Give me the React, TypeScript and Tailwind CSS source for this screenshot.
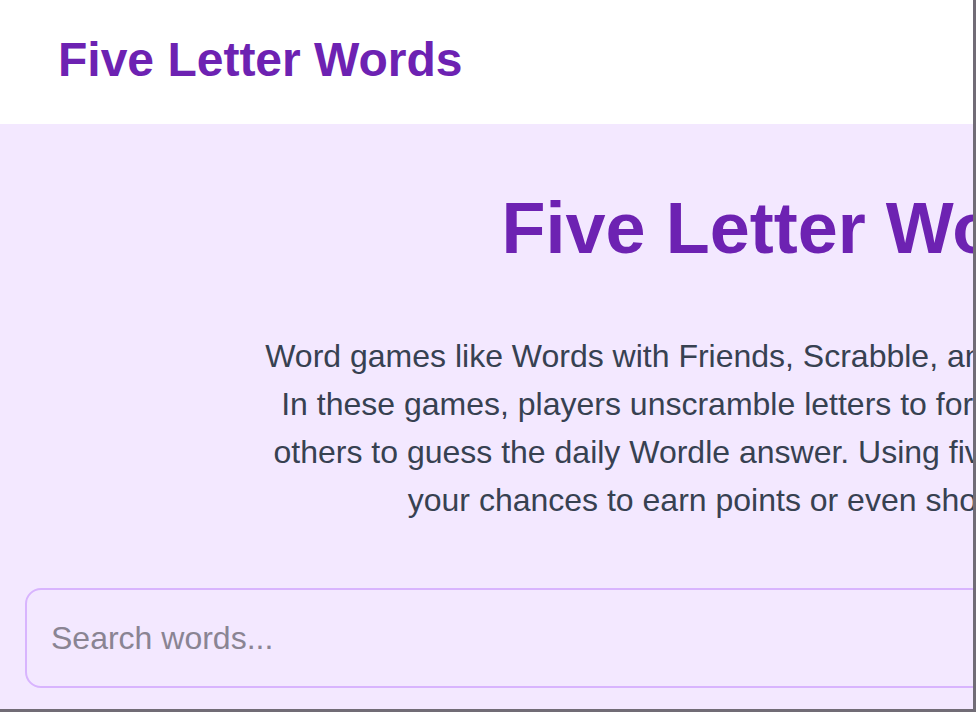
export default function App() {
  return (
    <div className="w-[976px] h-[712px] overflow-hidden border-r-[3px] border-b-[3px] border-[#716c76] bg-[#f3e8ff] font-['Liberation_Sans',Arial,sans-serif]">
      <div className="w-[1610px]">
        {/* Header */}
        <header className="h-[124px] bg-white px-[58px] pt-[32px]">
          <h1 className="text-[48px] leading-[55px] font-bold text-[#6d22b2]">Five Letter Words</h1>
        </header>

        {/* Hero */}
        <main className="px-[25px] pt-[63px]">
          <h2 className="text-center text-[72px] leading-[83px] font-bold text-[#6d22b2]">Five Letter Words</h2>
          <p className="mt-[62px] text-center text-[32px] leading-[48px] text-[#374151]">
            Word games like Words with Friends, Scrabble, and Wordle are really loved.
            <br />
            In these games, players unscramble letters to form words or compete with
            <br />
            others to guess the daily Wordle answer. Using five letter words could raise
            <br />
            your chances to earn points or even show off your skills.
          </p>
          <div className="mt-[64px]">
            <input
              type="text"
              placeholder="Search words..."
              className="w-full h-[100px] rounded-[16px] border-2 border-[#d8b4fe] bg-transparent px-[24px] text-[32px] text-[#374151] outline-none placeholder:text-[#8a8493]"
            />
          </div>
        </main>
      </div>
    </div>
  );
}
